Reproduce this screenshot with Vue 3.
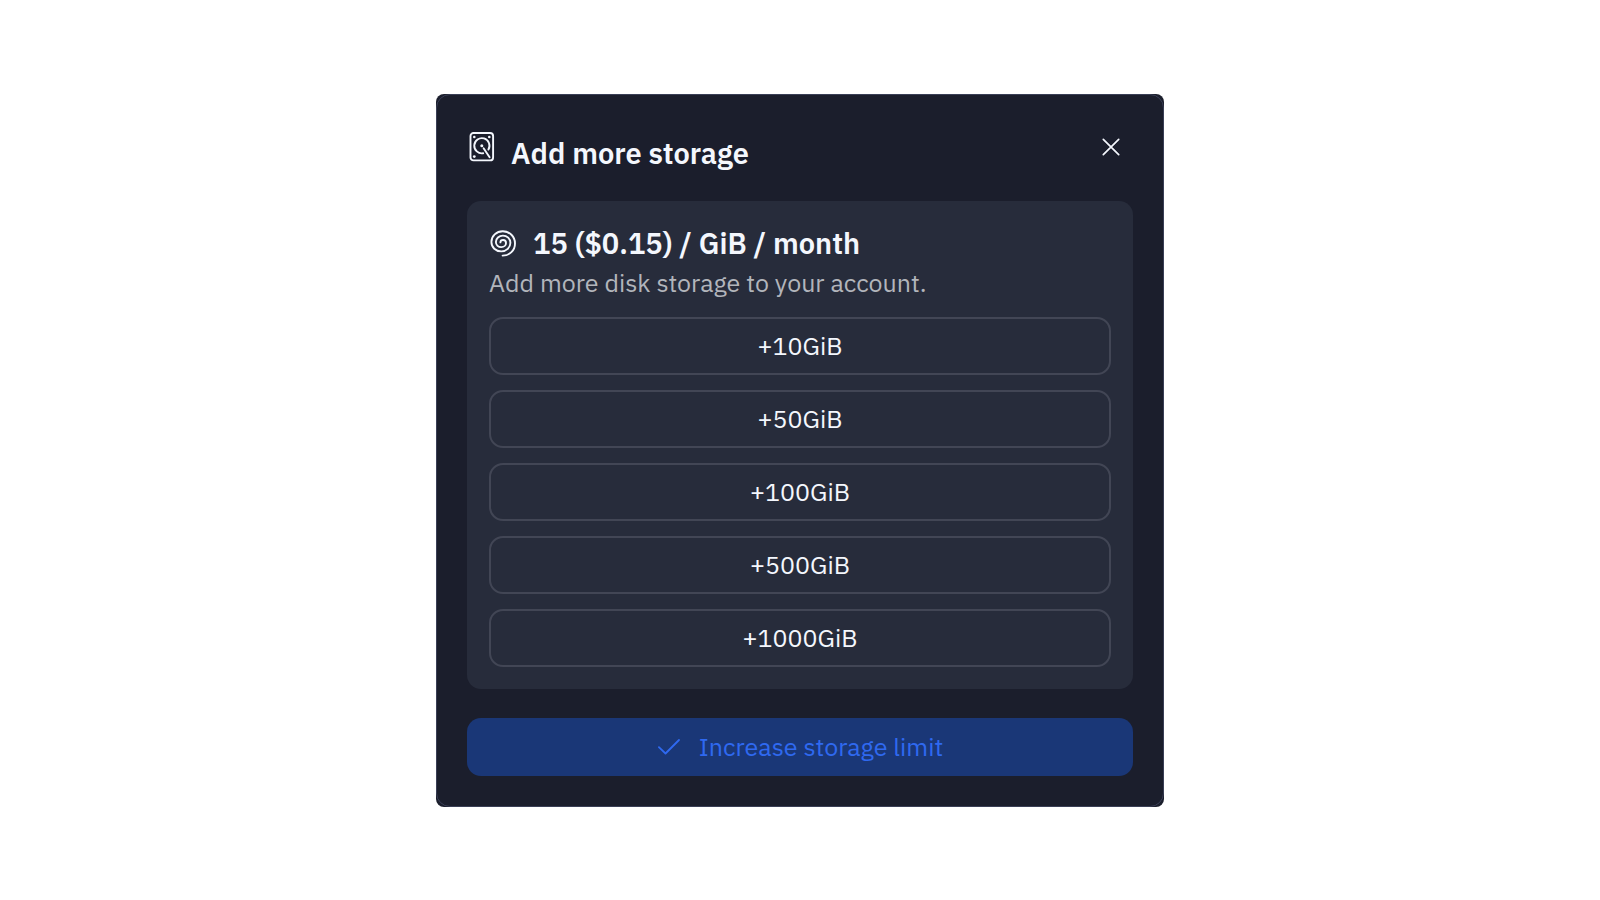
<script setup>
import { ref } from 'vue'

const sizes = [10, 50, 100, 500, 1000]
const selected = ref(null)
</script>

<template>
  <main class="page">
    <section class="dialog" role="dialog" aria-labelledby="dialog-title">
      <div class="frame">
        <header class="header">
          <svg class="disk" viewBox="0 0 26 32" aria-hidden="true">
            <rect x="1.5" y="2" width="22.6" height="27.4" rx="3" stroke-width="1.9" />
            <path d="M14.2 22.2A7.6 7.6 0 1 1 19.4 18.6" stroke-width="1.9" />
            <path d="M14.6 17.2l6 9" stroke-width="1.9" />
            <g class="dots">
              <circle cx="12.8" cy="14.8" r="1.5" />
              <circle cx="5.3" cy="6" r="1.3" />
              <circle cx="20.3" cy="6" r="1.3" />
              <circle cx="5.3" cy="25.6" r="1.4" />
            </g>
          </svg>
          <h1 id="dialog-title" class="title">Add more storage</h1>
          <button class="close" type="button" aria-label="Close">
            <svg viewBox="0 0 18 18" aria-hidden="true"><path d="M1.3 1.3l15.4 15.4M16.7 1.3L1.3 16.7" stroke-width="1.7" /></svg>
          </button>
        </header>

        <div class="panel">
          <h2 class="price">
            <svg class="spiral" viewBox="0 0 28 28" aria-hidden="true">
              <path d="M13.6 26.6C20.6 26.6 26 21.4 26 14.4C26 7.6 20.6 2.2 13.8 2.2C7.4 2.2 2.4 7 2.4 13C2.4 18.4 6.8 22.4 12.2 22.4C17.4 22.4 21.4 18.6 21.4 13.8C21.4 9.6 18 6.6 13.9 6.6C10 6.6 6.9 9.4 6.9 13C6.9 16 9.4 18.1 12.3 18.1C15 18.1 17 16.2 17 13.9C17 12.2 15.8 11 14.1 11C12.5 11 11.4 12 11.4 13.4" stroke-width="1.9" />
            </svg>
            <span>15 ($0.15) / GiB / month</span>
          </h2>
          <p class="hint">Add more disk storage to your account.</p>
          <div class="options">
            <button
              v-for="size in sizes"
              :key="size"
              class="option"
              type="button"
              :aria-pressed="selected === size"
              @click="selected = size"
            >+{{ size }}GiB</button>
          </div>
        </div>

        <button class="submit" type="button">
          <svg class="check" viewBox="0 0 24 18" aria-hidden="true"><path d="M1.9 9.1l6.6 6.4L22 2" stroke-width="1.8" /></svg>
          <span>Increase storage limit</span>
        </button>
      </div>
    </section>
  </main>
</template>

<style>
body {
  background: #fff;
}
</style>

<style scoped>
.page {
  box-sizing: border-box;
  min-height: 100vh;
  display: flex;
  align-items: center;
  justify-content: center;
  padding: 16px;
  font-family: "IBM Plex Sans", Roboto, "Liberation Sans", sans-serif;
  font-size: 25px;
  line-height: 34px;
  color: #f4f7fd;
}

svg {
  display: block;
  flex: none;
  fill: none;
  stroke: currentColor;
  stroke-linecap: round;
  stroke-linejoin: round;
}

button {
  font: inherit;
  color: inherit;
  cursor: pointer;
}

.dialog {
  width: 100%;
  max-width: 728px;
  border-radius: 8px;
  background: #1b1e2c;
  overflow: hidden;
}

.frame {
  border: 1px solid #3a3f56;
  border-radius: 14px;
  padding: 30px;
}

.header {
  display: flex;
  align-items: flex-start;
  gap: 16px;
  padding: 6px 0 26px;
}

.disk {
  width: 26px;
  height: 32px;
  margin-left: 2px;
}

.dots {
  fill: currentColor;
  stroke: none;
}

.title,
.price {
  margin: 0;
  font-size: 29px;
  line-height: 44px;
  font-weight: 600;
}

.close {
  margin: 2px 0 0 auto;
  padding: 5px 13px;
  border: 0;
  background: none;
}

.close svg {
  width: 18px;
  height: 18px;
}

.panel {
  padding: 20px 22px 22px;
  border-radius: 14px;
  background: #272c3b;
}

.price {
  display: flex;
  align-items: center;
  gap: 16px;
}

.spiral {
  width: 28px;
  height: 28px;
}

.hint {
  margin: 0 0 16px;
  line-height: 36px;
  color: #b2b5bb;
}

.options {
  display: flex;
  flex-direction: column;
  gap: 15px;
}

.option,
.submit {
  box-sizing: border-box;
  width: 100%;
  height: 58px;
  border-radius: 14px;
}

.option {
  border: 2px solid #424655;
  background: none;
}

.submit {
  display: flex;
  align-items: center;
  justify-content: center;
  gap: 18px;
  margin-top: 29px;
  border: 0;
  background: #1a3777;
  color: #2f69f0;
}

.check {
  width: 24px;
  height: 18px;
}
</style>
